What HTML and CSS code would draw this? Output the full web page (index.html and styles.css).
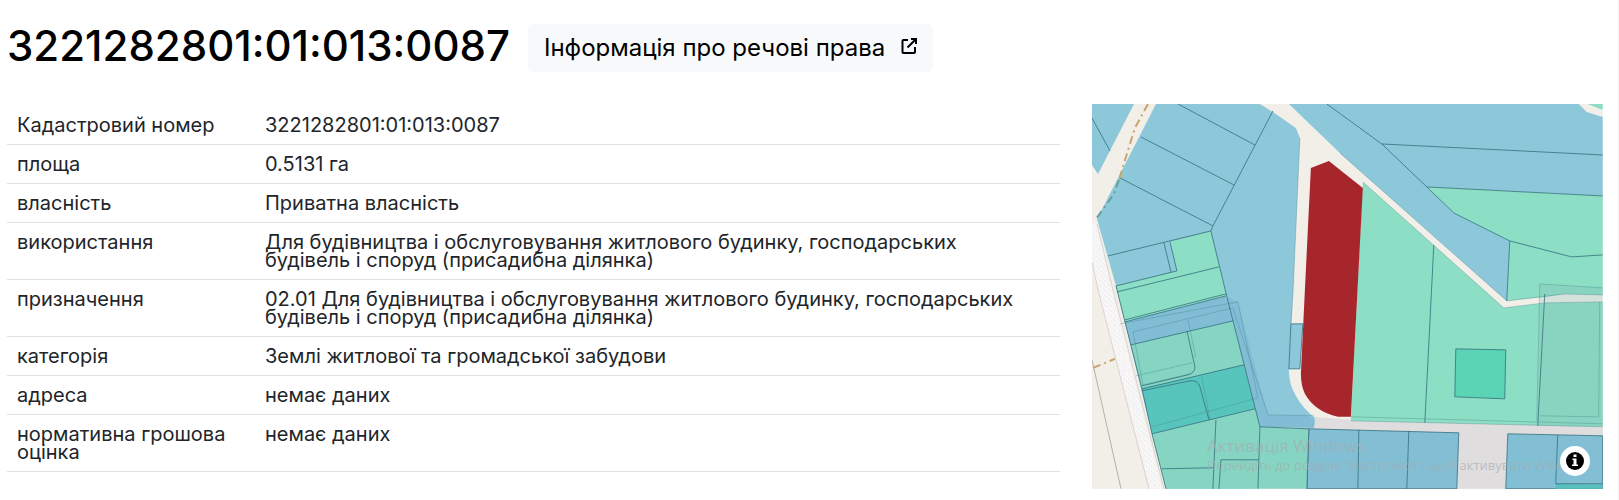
FILE: index.html
```html
<!DOCTYPE html>
<html lang="uk">
<head>
    <meta charset="UTF-8">
    <meta name="viewport" content="width=device-width, initial-scale=1.0">
    <title>3221282801:01:013:0087</title>
    <link rel="stylesheet" href="styles.css">
</head>
<body>
    <main class="page">
        <header class="parcel-header">
            <h1>3221282801:01:013:0087</h1>
            <a href="#" class="rights-link">
                Інформація про речові права
                <svg class="external-icon" viewBox="0 0 16 16" aria-hidden="true">
                    <path d="M7 2H2.5a1 1 0 0 0-1 1v11a1 1 0 0 0 1 1h10.500a1 1 0 0 0 1-1V9" />
                    <path d="M10 1h5v5M15 1L6.500 9.500" />
                </svg>
            </a>
        </header>
        <div class="parcel-content">
            <table class="parcel-table">
                <tbody>
                    <tr><th scope="row">Кадастровий номер</th><td>3221282801:01:013:0087</td></tr>
                    <tr><th scope="row">площа</th><td>0.5131 га</td></tr>
                    <tr><th scope="row">власність</th><td>Приватна власність</td></tr>
                    <tr><th scope="row">використання</th><td>Для будівництва і обслуговування житлового будинку, господарських будівель і споруд (присадибна ділянка)</td></tr>
                    <tr><th scope="row">призначення</th><td>02.01 Для будівництва і обслуговування житлового будинку, господарських будівель і споруд (присадибна ділянка)</td></tr>
                    <tr><th scope="row">категорія</th><td>Землі житлової та громадської забудови</td></tr>
                    <tr><th scope="row">адреса</th><td>немає даних</td></tr>
                    <tr><th scope="row">нормативна грошова оцінка</th><td>немає даних</td></tr>
                </tbody>
            </table>
            <div class="map">
                <svg class="map-canvas" viewBox="1092 104 511 385" role="img" aria-label="Карта ділянки">
                    <defs>
                        <pattern id="gravel" width="5" height="5" patternUnits="userSpaceOnUse">
                            <rect width="5" height="5" fill="#f8f7f7" />
                            <path d="M1 1h1v1h-1zM3 3h1v1h-1zM4 0h1v1h-1z" fill="#e9e5e6" />
                        </pattern>
                    </defs>
                    <rect x="1092" y="104" width="511" height="385" fill="#f2efe9" />

                    <!-- roads -->
                    <path d="M1092 224L1096 222L1112 290L1162 489H1150L1098 290L1092 262Z" fill="url(#gravel)" />
                    <path d="M1097 224L1113 290L1164 489M1092 262L1098 290L1149 489" fill="none" stroke="#ddd2d0" />
                    <path d="M1092 360L1121 489" fill="none" stroke="#b5b0aa" />
                    <path d="M1093 368L1115 359" class="track" />
                    <path d="M1300 416L1351 420L1603 427V489H1300Z" fill="#e0dddf" />

                    <!-- blue parcels -->
                    <g fill="#8dc8da">
                        <path d="M1092 104H1134L1098 174L1092 165Z" />
                        <path d="M1156 104H1260L1273 112L1296 128L1300 138L1293 295L1289 370Q1289 385 1296 396Q1303 409 1315 418L1314 428L1260 427L1255 489H1166L1152 434L1116 286L1097 219Z" />
                        <path d="M1291 324H1303L1300 369H1289Z" class="edge" />
                        <path d="M1289 104H1579L1587 112L1603 117V196L1427 187L1454 213L1510 241L1507 301L1340 153Z" />
                    </g>
                    <path d="M1238 302L1268 415L1308 416L1315 421L1314 428L1260 427L1226 296Z" fill="#82bdd6" />
                    <g fill="#82bfd5" class="edge">
                        <path d="M1309 429L1459 433L1457 489H1307Z" />
                        <path d="M1508 434L1603 436V489H1506Z" />
                    </g>
                    <path d="M1556 484L1603 485V489H1556Z" fill="#58c0bd" />

                    <!-- green parcels -->
                    <g fill="#8cdec5">
                        <path d="M1170 242L1211 231L1227 297L1125 322L1116 286L1177 271Z" />
                        <path d="M1588 104H1603V110Z" />
                        <path d="M1427 187L1603 196V295L1565 294L1545 297L1507 301L1510 241L1454 213Z" />
                        <path d="M1363 182L1504 308L1545 303L1603 302V427L1351 421Z" />
                    </g>
                    <path d="M1125 322L1226 296L1233 321L1131 345Z" fill="#82bdd6" />
                    <path d="M1131 345L1233 321L1244 365L1142 389Z" fill="#86d5c2" />
                    <path d="M1142 389L1244 365L1255 409L1152 434Z" fill="#58c5bd" />
                    <path d="M1152 434L1255 409L1260 427L1309 429L1307 489H1166Z" fill="#86d5c2" />
                    <path d="M1540 284L1603 288V427L1538 426Z" fill="#7fb8b5" opacity=".25" />
                    <path d="M1456 349L1506 350L1505 399L1455 397Z" fill="#5bd3b5" class="edge" />

                    <!-- parcel borders -->
                    <g class="edge" fill="none">
                        <path d="M1092 118L1110 151M1178 104L1255 145M1141 137L1234 185M1120 178L1213 226" />
                        <path d="M1273 111L1213 226L1211 231L1108 256M1211 231L1227 297L1260 427" />
                        <path d="M1164 243L1171 272M1170 242L1177 271L1116 286M1219 267L1117 292" />
                        <path d="M1125 322L1226 296M1125 320L1226 294M1131 345L1233 321M1142 389L1244 365M1152 434L1255 409M1116 286L1125 322L1142 389L1152 434L1166 489" />
                        <path d="M1187 331L1195 367Q1195 373 1188 375L1142 386M1142 391L1190 381Q1198 380 1200 387L1209 420" />
                        <path d="M1216 420L1213 489M1162 469L1213 468M1219 489L1221 460H1259M1260 427L1258 489M1260 427L1309 429L1307 489M1359 430L1358 489M1409 431L1407 489M1558 435L1556 484H1603" />
                        <path d="M1327 104L1382 144L1427 187L1454 213L1510 241L1572 257L1603 255M1382 144L1603 155M1427 187L1603 196" />
                        <path d="M1510 241L1507 301M1434 245L1425 423M1545 294L1538 426" />
                    </g>
                    <g class="edge-soft" fill="none">
                        <path d="M1120 324L1238 302L1258 398L1152 427M1133 332L1233 308L1268 415L1314 416" />
                        <path d="M1133 332L1143 385L1190 374M1136 376L1192 363M1188 320L1196 358M1202 377L1210 420" />
                        <path d="M1300 138L1293 295L1291 324M1340 153L1507 301L1565 294L1603 295M1363 182L1504 308L1545 303L1603 302" />
                        <path d="M1351 417L1603 424M1540 284L1603 288M1540 284L1537 421M1600 302L1599 417L1540 416M1351 421L1603 427" />
                    </g>

                    <!-- selected parcel -->
                    <path d="M1311 168L1329 161L1363 188L1351 417L1338 417Q1315 412 1305 394Q1301 386 1301 374L1305 290Z" fill="#a7262c" />

                    <path d="M1148 104L1135 128L1125 160L1119 180" class="track" />
                    <path d="M1119 180L1114 194L1096 219" class="track track-covered" />

                    <g class="watermark">
                        <text x="1207" y="452" font-size="17">Активація Windows</text>
                        <text x="1207" y="470" font-size="13">Перейдіть до розділу "Настройки", щоб активувати Windows.</text>
                    </g>
                </svg>
                <button type="button" class="map-info" aria-label="Інформація про карту">
                    <svg viewBox="0 0 20 20" aria-hidden="true">
                        <circle cx="10" cy="10" r="9" />
                        <path d="M8.500 3.500h3v2.500h-3zM7.500 7.500h4v6h1.500v1.500h-6v-1.500h1.500v-4.500h-1z" fill="#fff" />
                    </svg>
                </button>
            </div>
        </div>
    </main>
</body>
</html>
```
FILE: styles.css
```css
* {
    margin: 0;
    padding: 0;
    box-sizing: border-box;
}
body {
    font-family: Inter, "Noto Sans", sans-serif;
    background-color: #fff;
    color: #212529;
}
.page {
    min-height: 100vh;
    padding: 24px 15px 10px 7px;
    border-right: 1px solid #f3f3f3;
}
.parcel-header {
    display: flex;
    align-items: flex-start;
    gap: 18px;
    margin-bottom: 32px;
}
.parcel-header h1 {
    font-size: 42px;
    line-height: 44px;
    font-weight: 500;
    color: #000;
}
.rights-link {
    display: flex;
    align-items: center;
    gap: 16px;
    padding: 10px 16px;
    border-radius: 6px;
    background-color: #f8f9fa;
    color: #000;
    font-size: 24px;
    line-height: 28px;
    font-weight: 400;
    text-decoration: none;
}
.rights-link:hover {
    background-color: #e9ecef;
}
.external-icon {
    width: 16px;
    height: 16px;
    margin-bottom: 4px;
    fill: none;
    stroke: #000;
    stroke-width: 2;
}
.parcel-content {
    display: grid;
    grid-template-columns: 1fr 32%;
    gap: 32px;
    align-items: start;
}
.parcel-table {
    width: 100%;
    margin-top: 2px;
    table-layout: fixed;
    border-collapse: collapse;
    font-size: 20px;
    line-height: 18px;
}
.parcel-table th,
.parcel-table td {
    padding: 10px;
    border-bottom: 1px solid #dee2e6;
    font-weight: 400;
    text-align: left;
    vertical-align: top;
}
.parcel-table th {
    width: 248px;
}
.parcel-table td {
    padding-right: 24px;
}
.map {
    position: relative;
}
.map-canvas {
    display: block;
    width: 100%;
    height: auto;
}
.edge {
    stroke: #33707c;
    stroke-width: 1;
    stroke-opacity: 0.8;
}
.edge-soft {
    stroke: #3f7f86;
    stroke-opacity: 0.35;
}
.track {
    fill: none;
    stroke: #c9a468;
    stroke-width: 2;
    stroke-dasharray: 8 4 2 4;
}
.track-covered {
    stroke: #6a9f9d;
}
.watermark {
    font-family: "Open Sans", sans-serif;
    fill: #a5adb0;
    fill-opacity: 0.7;
}
.map-info {
    position: absolute;
    right: 13px;
    bottom: 13px;
    width: 30px;
    height: 30px;
    padding: 5px;
    border: none;
    border-radius: 50%;
    background-color: #fff;
    cursor: pointer;
}
.map-info svg {
    display: block;
    width: 20px;
    height: 20px;
}
```
